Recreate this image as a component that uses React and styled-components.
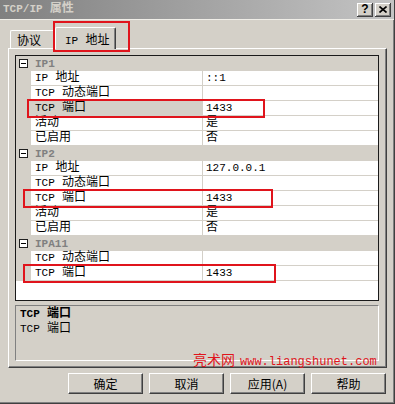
import React from "react";
import styled, { createGlobalStyle } from "styled-components";

const GlobalStyle = createGlobalStyle`
  html, body { margin: 0; padding: 0; background: #d4d0c8; }
  body {
    font-family: "Liberation Mono", "Noto Sans CJK SC", monospace;
    font-size: 12px;
    color: #000;
  }
`;

const Window = styled.div`
  position: relative;
  width: 395px;
  height: 404px;
  box-sizing: border-box;
  background: #d4d0c8;
  border-right: 1px solid #404040;
  border-bottom: 1px solid #404040;
  box-shadow: inset -1px -1px #808080;
  display: flex;
  flex-direction: column;
  overflow: hidden;
`;

const TitleBar = styled.div`
  flex: none;
  height: 19px;
  display: flex;
  align-items: center;
  gap: 2px;
  padding: 0 3px 0 3px;
  background: linear-gradient(to right, #808080, #c4c4c4);
  border-bottom: 1px solid #f0eee8;
`;

const TitleText = styled.div`
  flex: 1;
  color: #d4d0c8;
  font-weight: bold;
  line-height: 19px;
`;

const CaptionButton = styled.div`
  width: 16px;
  height: 14px;
  box-sizing: border-box;
  background: #d4d0c8;
  box-shadow: inset -1px -1px #404040, inset 1px 1px #fff, inset -2px -2px #808080;
  display: flex;
  align-items: center;
  justify-content: center;
  font-family: "Liberation Sans", sans-serif;
  font-weight: bold;
  font-size: 12px;
  line-height: 1;
  padding-bottom: 1px;
`;

const TabRow = styled.div`
  flex: none;
  height: 22px;
  margin-top: 6px;
  padding-left: 10px;
  display: flex;
  align-items: flex-end;
  position: relative;
`;

const Tab = styled.div`
  position: relative;
  box-sizing: border-box;
  display: flex;
  align-items: center;
  width: ${p => p.$width}px;
  height: ${p => (p.$active ? "22px" : "18px")};
  padding-left: ${p => (p.$active ? "9px" : "6px")};
  margin: 0 ${p => (p.$active ? "-2px" : "0")} ${p => (p.$active ? "-1px" : "0")};
  z-index: ${p => (p.$active ? 2 : 0)};
  background: #d4d0c8;
  border-top: 1px solid #fff;
  border-left: 1px solid #fff;
  border-right: 1px solid #404040;
  box-shadow: inset -1px 0 #808080;
  border-radius: 2px 2px 0 0;
  white-space: pre;
`;

const TabMark = styled.div`
  position: absolute;
  left: 53px;
  top: -5px;
  width: 77px;
  height: 31px;
  box-sizing: border-box;
  border: 2px solid #e0141c;
  z-index: 3;
`;

const Panel = styled.div`
  flex: none;
  position: relative;
  height: 320px;
  box-sizing: border-box;
  margin: 0 7px 0 8px;
  padding: 6px 7px 0 6px;
  border-top: 1px solid #fff;
  border-left: 1px solid #fff;
  border-right: 1px solid #404040;
  border-bottom: 1px solid #404040;
  box-shadow: inset -1px -1px #808080;
  display: flex;
  flex-direction: column;
`;

const Grid = styled.div`
  height: 246px;
  box-sizing: border-box;
  border: 1px solid #1a1a1a;
  background: #fff;
  display: flex;
  flex-direction: column;
  overflow: hidden;
`;

const CategoryRow = styled.div`
  height: 15px;
  flex: none;
  display: flex;
  align-items: center;
  background: #d4d0c8;
`;

const Gutter = styled.div`
  width: 15px;
  height: 100%;
  flex: none;
  display: flex;
  align-items: center;
  justify-content: center;
  background: #d4d0c8;
`;

const Expander = styled.div`
  width: 9px;
  height: 9px;
  box-sizing: border-box;
  border: 1px solid #202020;
  background: #fff;
  position: relative;
  &::after {
    content: "";
    position: absolute;
    left: 1px;
    right: 1px;
    top: 3px;
    height: 1px;
    background: #000;
  }
`;

const CategoryLabel = styled.div`
  padding-left: 4px;
  color: #808080;
  font-weight: bold;
`;

const PropRow = styled.div`
  position: relative;
  height: 15px;
  flex: none;
  display: flex;
  box-sizing: border-box;
  border-bottom: 1px solid #d4d0c8;
`;

const NameCell = styled.div`
  width: 172px;
  flex: none;
  box-sizing: border-box;
  padding-left: 4px;
  line-height: 14px;
  border-right: 1px solid #d4d0c8;
  background: ${p => (p.$selected ? "#d4d0c8" : "#fff")};
  white-space: nowrap;
`;

const ValueCell = styled.div`
  flex: 1;
  padding-left: 3px;
  line-height: 14px;
  white-space: nowrap;
`;

const RedMark = styled.div`
  position: absolute;
  top: -2px;
  height: 19px;
  box-sizing: border-box;
  border: 2px solid #e0141c;
  pointer-events: none;
  z-index: 1;
`;

const Desc = styled.div`
  margin-top: 4px;
  height: 56px;
  box-sizing: border-box;
  padding: 1px 4px;
  border-top: 1px solid #808080;
  border-left: 1px solid #808080;
  border-right: 1px solid #fff;
  border-bottom: 1px solid #fff;
  line-height: 15px;
`;

const DescTitle = styled.div`
  font-weight: bold;
`;

const Watermark = styled.div`
  position: absolute;
  left: 193px;
  top: 351px;
  color: #e0141c;
  font-family: "Liberation Mono", monospace;
  font-size: 12px;
  line-height: 16px;
  white-space: nowrap;
  z-index: 4;
`;

const WatermarkCJK = styled.span`
  font-family: "Noto Sans CJK SC", sans-serif;
  font-size: 14px;
  margin-right: 5px;
`;

const ButtonRow = styled.div`
  flex: none;
  margin-top: 5px;
  padding-right: 8px;
  display: flex;
  justify-content: flex-end;
  gap: 6px;
`;

const Button = styled.div`
  width: 75px;
  height: 21px;
  box-sizing: border-box;
  background: #d4d0c8;
  border-top: 1px solid #fff;
  border-left: 1px solid #fff;
  border-right: 1px solid #404040;
  border-bottom: 1px solid #404040;
  box-shadow: inset -1px -1px #808080;
  display: flex;
  align-items: center;
  justify-content: center;
  font-family: "Noto Sans CJK SC", sans-serif;
  font-size: 12px;
`;

const Latin = styled.span`
  font-size: 11px;
`;

const Mixed = ({ text }) => (
  <span>
    {text
      .split(/([\x21-\x7e]+)/)
      .filter(Boolean)
      .map((part, i) =>
        /^[\x21-\x7e]+$/.test(part) ? <Latin key={i}>{part}</Latin> : <span key={i}>{part}</span>
      )}
  </span>
);

const groups = [
  {
    name: "IP1",
    rows: [
      { k: "IP 地址", v: "::1" },
      { k: "TCP 动态端口", v: "" },
      { k: "TCP 端口", v: "1433", selected: true, mark: [11, 238] },
      { k: "活动", v: "是" },
      { k: "已启用", v: "否" },
    ],
  },
  {
    name: "IP2",
    rows: [
      { k: "IP 地址", v: "127.0.0.1" },
      { k: "TCP 动态端口", v: "" },
      { k: "TCP 端口", v: "1433", mark: [7, 250] },
      { k: "活动", v: "是" },
      { k: "已启用", v: "否" },
    ],
  },
  {
    name: "IPA11",
    rows: [
      { k: "TCP 动态端口", v: "" },
      { k: "TCP 端口", v: "1433", mark: [7, 253] },
    ],
  },
];

const CloseIcon = () => (
  <svg width="8" height="7" viewBox="0 0 8 7">
    <path d="M0.5 0.5 L7.5 6.5 M7.5 0.5 L0.5 6.5" stroke="#000" strokeWidth="1.6" />
  </svg>
);

export default function App() {
  return (
    <>
      <GlobalStyle />
      <Window>
        <TitleBar>
          <TitleText>
            <Mixed text="TCP/IP 属性" />
          </TitleText>
          <CaptionButton>?</CaptionButton>
          <CaptionButton>
            <CloseIcon />
          </CaptionButton>
        </TitleBar>

        <TabRow>
          <Tab $width={47}>协议</Tab>
          <Tab $active $width={61}>
            <Mixed text="IP 地址" />
          </Tab>
          <TabMark />
        </TabRow>

        <Panel>
          <Grid>
            {groups.map(g => (
              <React.Fragment key={g.name}>
                <CategoryRow>
                  <Gutter>
                    <Expander />
                  </Gutter>
                  <CategoryLabel>
                    <Mixed text={g.name} />
                  </CategoryLabel>
                </CategoryRow>
                {g.rows.map((r, i) => (
                  <PropRow key={i}>
                    <Gutter />
                    <NameCell $selected={r.selected}>
                      <Mixed text={r.k} />
                    </NameCell>
                    <ValueCell>
                      <Mixed text={r.v} />
                    </ValueCell>
                    {r.mark && <RedMark style={{ left: r.mark[0], width: r.mark[1] }} />}
                  </PropRow>
                ))}
              </React.Fragment>
            ))}
          </Grid>
          <Desc>
            <DescTitle>
              <Mixed text="TCP 端口" />
            </DescTitle>
            <div>
              <Mixed text="TCP 端口" />
            </div>
          </Desc>
        </Panel>

        <Watermark>
          <WatermarkCJK>亮术网</WatermarkCJK>www.liangshunet.com
        </Watermark>

        <ButtonRow>
          <Button>确定</Button>
          <Button>取消</Button>
          <Button>应用(A)</Button>
          <Button>帮助</Button>
        </ButtonRow>
      </Window>
    </>
  );
}
